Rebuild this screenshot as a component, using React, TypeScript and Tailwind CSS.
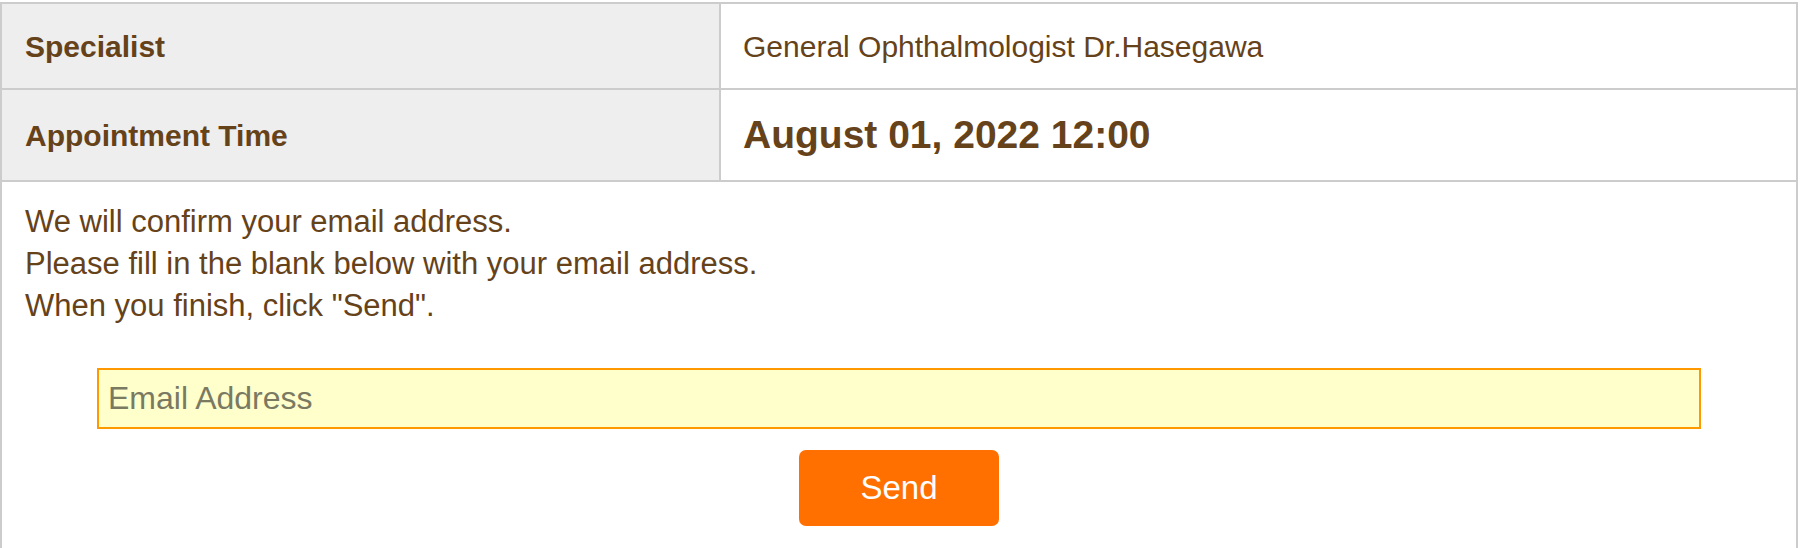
export default function App() {
  return (
    <div className="min-h-screen bg-white pt-[2px] font-['Liberation_Sans',Arial,sans-serif] text-[#65421a]">
      <div className="w-[1798px] border-2 border-b-0 border-[#cccccc]">
        {/* Specialist row */}
        <div className="grid grid-cols-[719px_1fr] border-b-2 border-[#cccccc]">
          <div className="flex h-[84px] items-center border-r-2 border-[#cccccc] bg-[#eeeeee] pl-[23px] text-[30px] font-bold">
            Specialist
          </div>
          <div className="flex items-center pl-[22px] text-[30px]">
            General Ophthalmologist Dr.Hasegawa
          </div>
        </div>

        {/* Appointment row */}
        <div className="grid grid-cols-[719px_1fr] border-b-2 border-[#cccccc]">
          <div className="flex h-[90px] items-center border-r-2 border-[#cccccc] bg-[#eeeeee] pl-[23px] text-[30px] font-bold">
            Appointment Time
          </div>
          <div className="flex items-center pl-[22px] text-[39px] font-bold">
            August 01, 2022 12:00
          </div>
        </div>

        {/* Email form */}
        <div className="px-[23px] pb-[30px] pt-[19px]">
          <p className="text-[31px] leading-[42px]">
            We will confirm your email address.
            <br />
            Please fill in the blank below with your email address.
            <br />
            When you finish, click "Send".
          </p>
          <div className="mt-[41px] flex flex-col items-center">
            <input
              type="email"
              placeholder="Email Address"
              className="h-[61px] w-[1604px] border-2 border-[#ff9900] bg-[#ffffcc] pl-[9px] text-[32px] text-[#65421a] outline-none placeholder:text-[#7a7a62]"
            />
            <button className="mt-[21px] h-[76px] w-[200px] rounded-[7px] bg-[#ff7000] text-[33px] text-white">
              Send
            </button>
          </div>
        </div>
      </div>
    </div>
  )
}
